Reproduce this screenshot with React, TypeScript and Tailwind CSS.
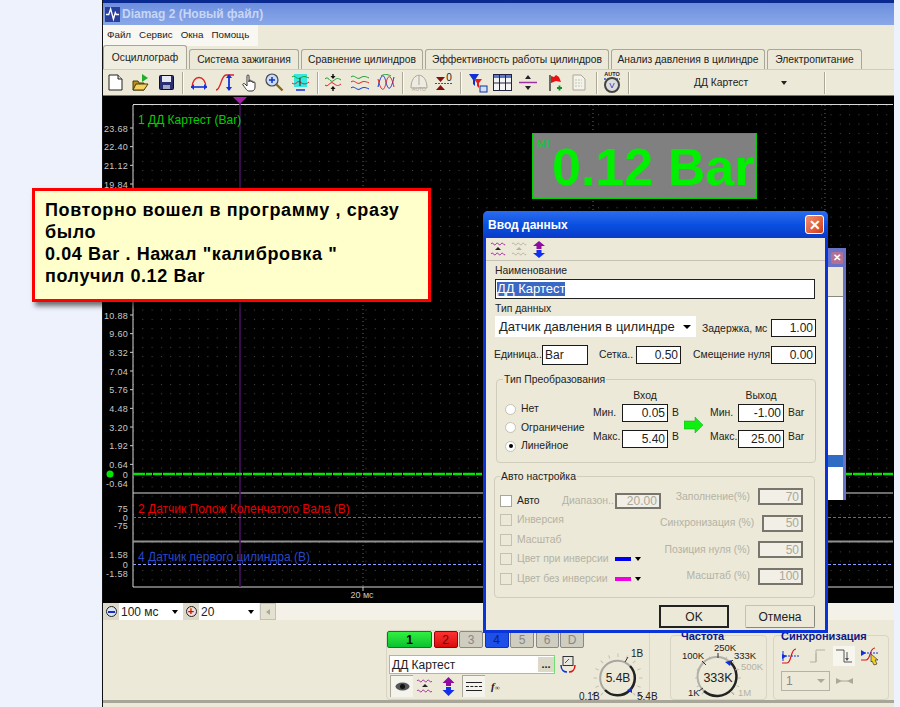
import React from "react";

const Doc = () => (
  <svg width="15" height="17" viewBox="0 0 15 17"><path d="M1 1h9l4 4v11H1z" fill="#fff" stroke="#222" /><path d="M10 1v4h4" fill="#ddd" stroke="#222" /></svg>
);
const Open = () => (
  <svg width="18" height="19" viewBox="0 0 18 19"><path d="M1 8h5l1 2h5v7H1z" fill="#b98f1c" stroke="#4a3a08" /><path d="M1 17l3-6h12l-4 6z" fill="#f4d25f" stroke="#4a3a08" /><path d="M10 1l6 4-6 4z" fill="#1fae2a" /></svg>
);
const Save = () => (
  <svg width="15" height="15" viewBox="0 0 15 15"><rect x="0.5" y="0.5" width="14" height="14" rx="1" fill="#2a2f70" stroke="#111" /><rect x="3" y="1" width="9" height="6" fill="#e8e8f4" /><rect x="4" y="10" width="7" height="4" fill="#a4a8c8" /></svg>
);
const ArcW = () => (
  <svg width="18" height="19" viewBox="0 0 18 19"><path d="M2 15C2 1 16 1 16 15" fill="none" stroke="#e02020" strokeWidth="1.4" /><path d="M1 14h16" stroke="#1030e0" strokeWidth="1.6" /><path d="M1 14l3-3v6zM17 14l-3-3v6z" fill="#1030e0" /></svg>
);
const ArcH = () => (
  <svg width="20" height="19" viewBox="0 0 20 19"><path d="M1 17C6 17 6 2 11 2h8" fill="none" stroke="#e02020" strokeWidth="1.3" /><path d="M14 2v15" stroke="#1030e0" strokeWidth="1.8" /><path d="M14 1l-3 4h6zM14 18l-3-4h6z" fill="#1030e0" /></svg>
);
const HandI = () => (
  <svg width="18" height="19" viewBox="0 0 18 19"><path d="M6 11V3a1 1 0 012 0v6-1a1 1 0 012 0v1a1 1 0 012 0v1a1 1 0 012 0v4c0 2-1 4-3 4H8c-2 0-3-2-6-6-1-1 1-2 2-1l2 2z" fill="#fff" stroke="#222" strokeWidth="0.9" /></svg>
);
const Zoomer = () => (
  <svg width="19" height="19" viewBox="0 0 19 19"><circle cx="7" cy="7" r="6" fill="#c8dcf4" stroke="#445" strokeWidth="1.2" /><path d="M4 7h6M7 4v6" stroke="#1030c0" strokeWidth="1.5" /><path d="M11.5 11.5l6 6" stroke="#8a6a1c" strokeWidth="2.4" /></svg>
);
const Cyan = () => (
  <svg width="19" height="19" viewBox="0 0 19 19"><rect x="3" y="1" width="13" height="13" fill="#35e8e0" /><path d="M1 4c3-3 4 3 8 1s4-2 9 0" fill="none" stroke="#18a030" /><path d="M1 10c4 3 5-3 8-1s5 3 9 0" fill="none" stroke="#e02020" /><path d="M5 17h9" stroke="#1030e0" strokeWidth="1.5" /><path d="M9 5v8" stroke="#222" /></svg>
);
const Wave3 = () => (
  <svg width="18" height="19" viewBox="0 0 18 19"><path d="M1 6c3-4 5 4 8 2s4-4 8-1" fill="none" stroke="#18a030" /><path d="M1 12c3 3 5-4 8-2s4 4 8 1" fill="none" stroke="#e02020" /><path d="M9 1v4M9 14v4" stroke="#111" strokeWidth="1.4" /><path d="M9 6L6.5 3h5zM9 13l-2.500 3h5z" fill="#111" /></svg>
);
const Wave4 = () => (
  <svg width="20" height="19" viewBox="0 0 20 19"><path d="M1 4c3-3 6 3 9 1s5-2 9 0" fill="none" stroke="#18a030" /><path d="M1 9c3-3 6 3 9 1s5-2 9 0" fill="none" stroke="#e02020" /><path d="M1 15c3-3 6 3 9 1s5-2 9 0" fill="none" stroke="#1030e0" /></svg>
);
const Wave5 = () => (
  <svg width="18" height="19" viewBox="0 0 18 19"><path d="M1 14C4 0 7 0 9 9s5 9 8-5" fill="none" stroke="#1030e0" /><path d="M1 6c3 13 6 13 8 4s5-9 8 4" fill="none" stroke="#e02020" /><path d="M4 3c3-2 6-2 10 0" fill="none" stroke="#18a030" /></svg>
);
const AutoOff = () => (
  <svg width="18" height="20" viewBox="0 0 18 20"><path d="M1 15C1 -2 17 -2 17 15z" fill="#eeece0" stroke="#aaa69a" /><path d="M9 3v9" stroke="#aaa69a" /><text x="9" y="18" textAnchor="middle" fontSize="5" fill="#aaa69a" fontFamily="Liberation Sans">AUTO</text></svg>
);
const Zero = () => (
  <svg width="18" height="19" viewBox="0 0 18 19"><path d="M1 4h9l-4.500 5zM1 17h9l-4.500-5z" fill="#8a1010" /><path d="M0 10.500h18" stroke="#555" strokeDasharray="2 1" /><text x="14" y="8" textAnchor="middle" fontSize="10" fill="#222" fontFamily="Liberation Sans">0</text></svg>
);
const Filter = () => (
  <svg width="20" height="20" viewBox="0 0 20 20"><path d="M1 1h10l-4 6v6L5 11V7z" fill="#1030d0" /><path d="M6 6h8l-3 4v5l-2-2v-3z" fill="#e02020" /><rect x="12" y="13" width="7" height="6" fill="#cfe0f8" stroke="#1030a0" /></svg>
);
const Table = () => (
  <svg width="19" height="17" viewBox="0 0 19 17"><rect x="0.500" y="0.500" width="18" height="16" fill="#f4f4f4" stroke="#224" /><rect x="1" y="1" width="17" height="3" fill="#5878c8" /><path d="M6.500 1v15M12.500 1v15M1 9h17" stroke="#224" /></svg>
);
const Divider = () => (
  <svg width="18" height="17" viewBox="0 0 18 17"><path d="M0 8.500h18" stroke="#a030a8" strokeWidth="1.5" /><path d="M9 1l-3 4h6zM9 16l-3-4h6z" fill="#222" /></svg>
);
const FlagI = () => (
  <svg width="14" height="18" viewBox="0 0 14 18"><path d="M2 1v16" stroke="#333" strokeWidth="1.4" /><path d="M3 2l3 1 2-2 3 2 2 5-5-1-5 2z" fill="#e81010" /><path d="M9 14h5M11.500 11.500v5" stroke="#109020" strokeWidth="1.8" /></svg>
);
const DocOff = () => (
  <svg width="14" height="17" viewBox="0 0 14 17"><path d="M1 1h8l4 4v11H1z" fill="#f4f3ea" stroke="#aaa69a" /><path d="M3 6h7M3 9h7M3 12h7" stroke="#c4c1b4" strokeDasharray="2 1" /></svg>
);
const AutoV = () => (
  <svg width="18" height="23" viewBox="0 0 18 23"><text x="9" y="5" textAnchor="middle" fontSize="5.500" fontWeight="700" fill="#222" fontFamily="Liberation Sans">AUTO</text><path d="M1 8h16" stroke="#3050e0" strokeWidth="1.500" strokeDasharray="2 1" /><circle cx="9" cy="14" r="7" fill="#ddd" stroke="#444" strokeWidth="2" /><text x="9" y="17" textAnchor="middle" fontSize="8" fill="#2030c0" fontFamily="Liberation Sans">V</text></svg>
);
const Sep = ({ className }: { className: string }) => <div className={`h-[22px] w-[2px] border-l border-[#aca899] bg-[#fbfaf4] ${className}`} />;

const ticks1 = ["23.68", "22.40", "21.12", "19.84"];
const ticks2 = ["10.88", "9.60", "8.32", "7.04", "5.76", "4.48", "3.20", "1.92", "0.64"];

function Chart() {
  return (
    <svg className="block h-[507px] w-[791px]" viewBox="103 96 791 507" fontFamily="Liberation Sans">
      <defs>
        <pattern id="dots" x="133" y="105" width="9.300" height="9.300" patternUnits="userSpaceOnUse">
          <rect x="0" y="0" width="1" height="1" fill="#4a4a4a" />
        </pattern>
      </defs>
      <rect x="103" y="96" width="791" height="507" fill="#000" />
      <rect x="133" y="105" width="760" height="482" fill="url(#dots)" />
      {[363, 593, 825].map((x) => (
        <path key={x} d={`M${x} 105V587`} stroke="#666" strokeDasharray="1 3" />
      ))}
      <path d="M133 104.500H893M133 105V587M133 493H893M133 587H893" stroke="#d8d8d8" fill="none" />
      <path d="M133 541.500H893" stroke="#909090" strokeWidth="2" />
      <path d="M240 100V587" stroke="#4b1060" strokeWidth="1.500" />
      <path d="M233 97h14l-7 7z" fill="#a020a8" />
      <path d="M133 474H893" stroke="#00e800" strokeWidth="2.500" strokeDasharray="12 1 6 1 9 1" />
      <path d="M133 517.500H893" stroke="#ff3030" strokeDasharray="3 2" />
      <path d="M133 564.500H893" stroke="#8a9cff" strokeDasharray="3 2" />
      <circle cx="110" cy="474" r="3.500" fill="#00e800" />
      <text x="138" y="124" fontSize="12" fill="#00d000">1 ДД Картест (Bar)</text>
      <text x="138" y="513" fontSize="12" fill="#e80000">2 Датчик Полож Коленчатого Вала (В)</text>
      <text x="138" y="561" fontSize="12" fill="#2848c8">4 Датчик первого цилиндра (В)</text>
      {ticks1.map((t, i) => (
        <g key={t}>
          <text x="128" y={131.500 + i * 18.670} fontSize="9" letterSpacing="0.3" textAnchor="end" fill="#c8c8c8">{t}</text>
          <path d={`M130 ${128 + i * 18.670}h3`} stroke="#ccc" />
        </g>
      ))}
      {ticks2.map((t, i) => (
        <g key={t}>
          <text x="128" y={318.500 + i * 18.670} fontSize="9" letterSpacing="0.3" textAnchor="end" fill="#c8c8c8">{t}</text>
          <path d={`M130 ${315 + i * 18.670}h3`} stroke="#ccc" />
        </g>
      ))}
      {[["0", 477.500], ["-0.64", 486.500], ["75", 511.500], ["0", 520.500], ["-75", 528.500], ["1.58", 557.500], ["0", 567.500], ["-1.58", 576.500]].map(([t, y], i) => (
        <text key={i} x="128" y={y as number} fontSize="9" letterSpacing="0.3" textAnchor="end" fill="#c8c8c8">{t}</text>
      ))}
      <path d="M363 587v4" stroke="#ccc" />
      <text x="362" y="598" fontSize="9" textAnchor="middle" fill="#c8c8c8">20 мс</text>
    </svg>
  );
}

function Knob1() {
  const ticks = Array.from({ length: 13 }, (_, i) => -135 + i * 22.500);
  return (
    <svg width="84" height="56" viewBox="0 0 84 56" fontFamily="Liberation Sans" className="overflow-visible">
      {ticks.map((a) => (
        <path key={a} d="M42 6v-3.500" transform={`rotate(${a} 42 27)`} stroke="#c4c1b4" />
      ))}
      <path d="M29 39A17 17 0 0154 15" fill="none" stroke="#a8a8a0" strokeWidth="2" />
      <path d="M54 15A17 17 0 0129 39" fill="none" stroke="#222" strokeWidth="2.500" />
      <path d="M51 39l5-2 0 5z" fill="#1030e0" />
      <text x="42" y="31" textAnchor="middle" fontSize="12" fill="#222">5.4В</text>
      <text x="55" y="6" fontSize="10" fill="#222">1В</text>
      <path d="M52 6l-3 5M21 41l-5 3M62 42l5 4" stroke="#333" fill="none" />
      <text x="3" y="49" fontSize="10" fill="#222">0.1В</text>
      <text x="61" y="49" fontSize="10" fill="#222">5.4В</text>
    </svg>
  );
}

function Knob2() {
  const ticks = Array.from({ length: 13 }, (_, i) => -135 + i * 22.500);
  return (
    <svg width="96" height="58" viewBox="0 0 96 58" fontFamily="Liberation Sans">
      {ticks.map((a) => (
        <path key={a} d="M47 17v-3" transform={`rotate(${a} 47 37)`} stroke="#c4c1b4" />
      ))}
      <path d="M33 50A18 18 0 0159 21" fill="none" stroke="#b0b0a8" strokeWidth="2" />
      <path d="M59 21A18 18 0 0133 50" fill="none" stroke="#222" strokeWidth="2.500" />
      <path d="M54 21l7-2-2 6z" fill="#1030e0" />
      <text x="47" y="41" textAnchor="middle" fontSize="12.500" fill="#222">333K</text>
      <text x="43" y="10" fontSize="9.500" fill="#222">250K</text>
      <text x="11" y="18" fontSize="9.500" fill="#222">100K</text>
      <text x="63" y="18" fontSize="9.500" fill="#222">333K</text>
      <text x="70" y="29" fontSize="9.500" fill="#b4b2a4">500K</text>
      <text x="17" y="55" fontSize="9.500" fill="#222">1K</text>
      <text x="67" y="55" fontSize="9.500" fill="#b4b2a4">1M</text>
      <path d="M47 12v5M31 20l4 4M62 19l-3 3M28 50l4-3" stroke="#333" />
      <path d="M67 28l-3 1M60 51l3 3" stroke="#b4b2a4" />
    </svg>
  );
}

const Chan = ({ label, className }: { label: string; className: string }) => (
  <div className={`flex h-[17px] items-center justify-center rounded-[2px] border text-[12px] ${className}`}>{label}</div>
);

const Field = ({ value, className = "", off = false, left = false }: { value: string; className?: string; off?: boolean; left?: boolean }) => (
  <div className={`flex items-center border px-[2px] text-[12px] leading-none ${left ? "justify-start" : "justify-end"} ${off ? "border-[#77756c] bg-[#f1efe6] text-[#aca899]" : "border-[#1a1a1a] bg-white text-[#222]"} ${className}`}>{value}</div>
);

const Radio = ({ label, on = false }: { label: string; on?: boolean }) => (
  <div className="flex h-[18.500px] items-center gap-[5px]">
    <div className="flex h-[11px] w-[11px] items-center justify-center rounded-full border border-[#c4c1b4] bg-white">
      {on && <div className="h-[4px] w-[4px] rounded-full bg-black" />}
    </div>
    <span>{label}</span>
  </div>
);

const Check = ({ label, on = false, extra }: { label: string; on?: boolean; extra?: React.ReactNode }) => (
  <div className={`flex h-[19.500px] items-center gap-[5px] ${on ? "text-[#222]" : "text-[#b4b2a4]"}`}>
    <div className={`h-[12px] w-[12px] border ${on ? "border-[#a8a698] bg-white" : "border-[#c4c1b4]"}`} />
    <span>{label}</span>
    {extra}
  </div>
);

const Swatch = ({ className }: { className: string }) => (
  <div className="absolute left-[115px] flex items-center gap-[4px]">
    <div className={`h-[4px] w-[16px] ${className}`} />
    <div className="h-0 w-0 border-x-[3px] border-t-[4px] border-x-transparent border-t-black" />
  </div>
);

const RightRow = ({ label, value }: { label: string; value: string }) => (
  <div className="flex h-[17px] items-center justify-end gap-[8px] text-[#b4b2a4]">
    <span>{label}</span>
    <Field value={value} off className="h-[17px] w-[45px] border-2" />
  </div>
);

const tabClass = "flex h-[20px] items-center justify-center rounded-t-[3px] border border-b-0 border-[#a8a698]";

export default function App() {
  return (
    <div className="relative flex h-[707px] w-[900px] overflow-hidden whitespace-nowrap bg-[#eef2fc] font-[family-name:'Liberation_Sans',sans-serif] text-[11px] text-[#222]">
      <div className="w-[102px] shrink-0" />
      <main className="flex h-[707px] w-[792px] shrink-0 flex-col border-l border-[#111] bg-[#ece9d8]">
        <div className="h-[3px] shrink-0 bg-[#0a2a90]" />
        <div className="flex h-[22px] shrink-0 items-center gap-[2px] bg-gradient-to-b from-[#6c8ede] to-[#8aa8e8] pl-[2px] text-[12px] font-bold text-[#c8d6f4]">
          <svg width="15" height="15" viewBox="0 0 16 16"><rect width="16" height="16" fill="#2a3f9c" /><path d="M1 8h3l2-6 3 11 2-7 1 2h3" fill="none" stroke="#fff" strokeWidth="1.400" /></svg>
          <span>Diamag 2 (Новый файл)</span>
        </div>
        <div className="flex h-[21px] shrink-0 items-center">
          <div className="flex h-full w-[155px] items-center gap-[8px] bg-[#f8f7f2] pl-[4px] text-[9.800px]">
            <span>Файл</span><span>Сервис</span><span>Окна</span><span>Помощь</span>
          </div>
        </div>
        <div className="flex h-[24px] shrink-0 items-end gap-[2px] border-b border-[#d0cdbc] text-[10.300px]">
          <div className="flex h-[24px] w-[84px] items-center justify-center rounded-t-[3px] border border-b-0 border-[#a8a698] bg-[#f0eee0]">Осциллограф</div>
          <div className={`${tabClass} w-[110px]`}>Система зажигания</div>
          <div className={`${tabClass} w-[122px]`}>Сравнение цилиндров</div>
          <div className={`${tabClass} w-[184px]`}>Эффективность работы цилиндров</div>
          <div className={`${tabClass} w-[154px]`}>Анализ давления в цилиндре</div>
          <div className={`${tabClass} w-[95px]`}>Электропитание</div>
        </div>
        <div className="flex h-[26px] shrink-0 items-center border-b border-[#777]">
          <div className="ml-[5px]"><Doc /></div>
          <div className="ml-[9px]"><Open /></div>
          <div className="ml-[9px]"><Save /></div>
          <Sep className="ml-[8px]" />
          <div className="ml-[6px]"><ArcW /></div>
          <div className="ml-[7px]"><ArcH /></div>
          <div className="ml-[6px]"><HandI /></div>
          <div className="ml-[6px]"><Zoomer /></div>
          <div className="ml-[7px]"><Cyan /></div>
          <Sep className="ml-[7px]" />
          <div className="ml-[5px]"><Wave3 /></div>
          <div className="ml-[8px]"><Wave4 /></div>
          <div className="ml-[7px]"><Wave5 /></div>
          <Sep className="ml-[7px]" />
          <div className="ml-[6px]"><AutoOff /></div>
          <div className="ml-[7px]"><Zero /></div>
          <Sep className="ml-[7px]" />
          <div className="ml-[6px]"><Filter /></div>
          <div className="ml-[5px]"><Table /></div>
          <div className="ml-[7px]"><Divider /></div>
          <div className="ml-[11px]"><FlagI /></div>
          <div className="ml-[10px]"><DocOff /></div>
          <Sep className="ml-[10px]" />
          <div className="ml-[5px]"><AutoV /></div>
          <Sep className="ml-[7px]" />
          <div className="flex w-[194px] items-center">
            <span className="ml-[64px] text-[10.300px]">ДД Картест</span>
            <div className="ml-[33px] h-0 w-0 border-x-[3px] border-t-[4px] border-x-transparent border-t-[#222]" />
          </div>
          <Sep className="" />
        </div>
        <Chart />
        <div className="flex h-[17px] shrink-0 items-center bg-[#f3f1e8] text-[12px]">
          <div className="flex h-[17px] w-[16px] items-center justify-center bg-[#dcd9c8]">
            <div className="flex h-[11px] w-[11px] items-center justify-center rounded-full border border-[#222] bg-[#dfe4f4]"><div className="h-[2px] w-[7px] bg-[#1030c0]" /></div>
          </div>
          <div className="flex h-[17px] w-[64px] items-center justify-between bg-white pl-[2px] pr-[5px]">
            <span>100 мс</span>
            <div className="h-0 w-0 border-x-[3px] border-t-[4px] border-x-transparent border-t-black" />
          </div>
          <div className="flex h-[17px] w-[16px] items-center justify-center bg-[#dcd9c8]">
            <div className="flex h-[11px] w-[11px] items-center justify-center rounded-full border border-[#222] bg-[#f4dede] text-[11px] font-bold leading-none text-[#c01010]">+</div>
          </div>
          <div className="flex h-[17px] w-[60px] items-center justify-between bg-white pl-[2px] pr-[5px]">
            <span>20</span>
            <div className="h-0 w-0 border-x-[3px] border-t-[4px] border-x-transparent border-t-black" />
          </div>
          <div className="ml-[1px] flex h-[17px] w-[16px] items-center justify-center border border-[#c4c1b4] bg-[#e4e1d0]">
            <div className="h-0 w-0 border-y-[3px] border-r-[4px] border-y-transparent border-r-[#aca899]" />
          </div>
        </div>
        <div className="flex h-[83px] shrink-0 items-start border-b-[3px] border-[#a8a698]">
          <div className="ml-[283px] mt-[10px] h-[70px] w-[264px] rounded-[4px] border border-[#d8d5c4]">
            <div className="flex gap-[1.500px]">
              <Chan label="1" className="w-[45px] border-[#0a7a2a] bg-gradient-to-b from-[#30f040] to-[#08c030] font-bold text-black" />
              <Chan label="2" className="w-[24px] border-[#900] bg-gradient-to-b from-[#ff3030] to-[#d80808] text-[#600]" />
              <Chan label="3" className="w-[24px] border-[#888] bg-[#cfccc0] text-[#888]" />
              <Chan label="4" className="w-[24px] border-[#1030b0] bg-[#1c50e8] text-[#102070]" />
              <Chan label="5" className="w-[24px] border-[#888] bg-[#cfccc0] text-[#888]" />
              <Chan label="6" className="w-[23px] border-[#888] bg-[#cfccc0] text-[#888]" />
              <Chan label="D" className="w-[24px] border-[#888] bg-[#cfccc0] text-[#888]" />
            </div>
            <div className="mt-[3px] flex">
              <div className="w-[191px] pl-[2px] pt-[4px]">
                <div className="flex items-center">
                  <div className="flex h-[19px] w-[166px] items-center justify-between border border-[#70e070] bg-white pl-[2px] text-[12px]">
                    <span>ДД Картест</span>
                    <div className="flex h-[15px] w-[16px] items-center justify-center bg-[#dcd9c8] text-[11px] font-bold leading-none">...</div>
                  </div>
                  <svg className="ml-[5px]" width="16" height="18" viewBox="0 0 16 18"><rect x="3" y="0.500" width="10" height="9" fill="#e8e8e0" stroke="#333" /><path d="M5 7l4-4" stroke="#555" /><path d="M1 9c0 5 3 7 6 7" fill="none" stroke="#1030d0" strokeWidth="1.500" /><path d="M15 9c0 5-3 7-6 7" fill="none" stroke="#e01010" strokeWidth="1.500" /></svg>
                </div>
                <div className="mt-[1px] flex items-center pl-[1px]">
                  <div className="flex h-[22px] w-[23px] items-center justify-center border-l border-t border-[#aca899] bg-[#f4f3ec]">
                    <svg width="15" height="9" viewBox="0 0 15 9"><ellipse cx="7.500" cy="4.500" rx="7" ry="4" fill="#555" /><circle cx="7.500" cy="4.500" r="2.500" fill="#111" /></svg>
                  </div>
                  <svg className="ml-[3px]" width="18" height="18" viewBox="0 0 18 18"><path d="M1 4c2-3 3 3 5 0s3 3 5 0 3 3 5 0M1 14c2-3 3 3 5 0s3 3 5 0 3 3 5 0" fill="none" stroke="#a020a0" /><path d="M9 7l-3 3h6z" fill="#222" /></svg>
                  <svg className="ml-[7px]" width="15" height="19" viewBox="0 0 15 19"><path d="M7.500 0l6 6H10v3H5V6H1.500z" fill="#900ca0" /><path d="M7.500 19l6-6H10v-3H5v3H1.500z" fill="#1030f0" /></svg>
                  <div className="ml-[6px] flex h-[22px] w-[23px] flex-col items-center justify-center gap-[3px] border-l border-t border-[#aca899] bg-[#f4f3ec]">
                    <div className="h-px w-[16px] bg-[#222]" /><div className="h-px w-[16px] border-t border-dashed border-[#222]" /><div className="h-px w-[16px] bg-[#222]" />
                  </div>
                  <span className="ml-[6px] font-[family-name:'Liberation_Serif',serif] text-[11px] font-bold italic">f<span className="text-[7px] not-italic">∞</span></span>
                </div>
              </div>
              <Knob1 />
            </div>
          </div>
          <div className="ml-[20px] mt-[15px] h-[65px] w-[97px] rounded-[4px] border border-[#d8d5c4]">
            <div className="-mt-[5px] pl-[10px] font-bold leading-[10px] text-[#101880]">Частота</div>
            <Knob2 />
          </div>
          <div className="ml-[6px] mt-[15px] h-[65px] w-[116px] rounded-[4px] border border-[#d8d5c4] pl-[7px]">
            <div className="-mt-[5px] font-bold leading-[11px] text-[#101880]">Синхронизация</div>
            <div className="mt-[4px] flex items-center">
              <svg width="20" height="18" viewBox="0 0 20 18"><path d="M1 16h5C11 16 9 2 15 2" fill="none" stroke="#e01010" strokeWidth="1.200" /><path d="M1 9h18" stroke="#1030e0" strokeDasharray="2 1" /><path d="M2 4v10" stroke="#1030e0" /><path d="M1 7l5 2-5 3z" fill="#1030e0" /></svg>
              <svg className="ml-[8px]" width="18" height="18" viewBox="0 0 18 18"><path d="M1 15h6V3h9" fill="none" stroke="#b4b2a4" /><path d="M7 6v9" stroke="#b4b2a4" /></svg>
              <div className="ml-[6px] flex h-[20px] w-[22px] items-center justify-center bg-[#f6f5ee]">
                <svg width="18" height="18" viewBox="0 0 18 18"><path d="M1 3h8v12h8" fill="none" stroke="#555" /><path d="M12 5v8" stroke="#555" /><path d="M12 14l-2-3h4z" fill="#555" /></svg>
              </div>
              <svg className="ml-[5px]" width="20" height="20" viewBox="0 0 20 20"><path d="M1 14h5C11 14 9 2 15 2" fill="none" stroke="#e01010" strokeWidth="1.200" /><path d="M1 7h18" stroke="#1030e0" strokeDasharray="2 1" /><path d="M1 4l5 3-5 3z" fill="#1030e0" /><path d="M11 8l7 6-3 0 2 4-3 1-2-4-1 1z" fill="#f4d020" stroke="#222" strokeWidth="0.600" /></svg>
            </div>
            <div className="mt-[5px] flex items-center">
              <div className="flex h-[20px] w-[49px] items-center justify-between border border-[#b4b2a4] px-[4px] text-[12px] text-[#888]">
                <span>1</span>
                <div className="h-0 w-0 border-x-[4px] border-t-[4px] border-x-transparent border-t-[#aca899]" />
              </div>
              <svg className="ml-[6px]" width="17" height="8" viewBox="0 0 17 8"><path d="M0 1l6 3-6 3zM17 1l-6 3 6 3z" fill="#aca899" /><path d="M5 4h7" stroke="#aca899" /></svg>
            </div>
          </div>
        </div>
      </main>
      <div className="w-[6px] shrink-0" />

      {/* measurement readout */}
      <div className="absolute left-[532px] top-[133px] h-[66px] w-[225px] border border-[#00d000] bg-[#808080]">
        <span className="absolute left-[4px] top-[3px] text-[10px] text-[#10d010]">M1</span>
        <span className="absolute left-[19px] top-[3px] text-[52px] font-bold leading-[60px] text-[#00f000]">0.12 Bar</span>
      </div>

      {/* window behind the dialog */}
      <div className="absolute left-[825px] top-[248px] flex h-[252px] w-[21px] flex-col border-x-[3px] border-[#6a72c8] bg-[#ece9d8]">
        <div className="flex h-[19px] items-start justify-end bg-[#6a72c8] pt-[4px]">
          <div className="flex h-[12px] w-[12px] items-center justify-center rounded-[2px] bg-[#b47090] text-[10px] font-bold leading-none text-white">✕</div>
        </div>
        <div className="h-[30px] border-b border-[#8a887c]" />
        <div className="flex-1 bg-white pt-[158px]"><div className="h-[12px] bg-[#2f6cc4]" /></div>
      </div>

      {/* dialog */}
      <div className="absolute left-[483px] top-[211px] flex h-[422px] w-[345px] flex-col rounded-t-[5px] border-[3px] border-t-0 border-[#0a34d8] bg-[#ece9d8] text-[10.400px]">
        <div className="-mx-[3px] flex h-[27px] shrink-0 items-center justify-between rounded-t-[5px] bg-gradient-to-b from-[#2a6cf0] via-[#0a50e0] to-[#0a3ac8] pl-[5px] pr-[4px] text-[12px] font-bold text-white">
          <span>Ввод данных</span>
          <div className="flex h-[19px] w-[19px] items-center justify-center rounded-[3px] border border-white bg-gradient-to-br from-[#f09070] to-[#d03810] text-[14px] font-bold leading-none text-white">✕</div>
        </div>
        <div className="flex h-[23px] shrink-0 items-center gap-[5px] border-b border-[#c4c1b4] pl-[4px]">
          <svg width="16" height="16" viewBox="0 0 16 16"><path d="M1 3c2-3 3 3 5 0s3 3 5 0 3 3 4 0M1 13c2-3 3 3 5 0s3 3 5 0 3 3 4 0" fill="none" stroke="#a020a0" /><path d="M8 6l-3 3h6z" fill="#222" /></svg>
          <svg width="16" height="16" viewBox="0 0 16 16"><path d="M1 3c2-3 3 3 5 0s3 3 5 0 3 3 4 0M1 13c2-3 3 3 5 0s3 3 5 0 3 3 4 0" fill="none" stroke="#b4b2a4" /><path d="M8 6l-3 3h6z" fill="#b4b2a4" /></svg>
          <svg width="14" height="17" viewBox="0 0 14 17"><path d="M7 0l6 5H9.500v3h-5V5H1z" fill="#900ca0" /><path d="M7 17l6-5H9.500V9h-5v3H1z" fill="#1030f0" /></svg>
        </div>
        <div className="mt-[3px] shrink-0 pl-[9px] leading-[14px]">Наименование</div>
        <div className="ml-[9px] mt-[1px] flex h-[20px] w-[320px] shrink-0 items-center border border-[#222] bg-white pl-[1px] text-[13px]">
          <span className="bg-[#3a68c4] leading-[14px] text-white">ДД Картест</span>
        </div>
        <div className="mt-[3px] shrink-0 pl-[9px] leading-[14px]">Тип данных</div>
        <div className="flex shrink-0 items-end">
          <div className="ml-[9px] flex h-[21px] w-[201px] items-center justify-between bg-white pl-[4px] pr-[5px] text-[13px]">
            <span>Датчик давления в цилиндре</span>
            <div className="h-0 w-0 border-x-[4px] border-t-[4px] border-x-transparent border-t-black" />
          </div>
          <span className="ml-[6px] w-[69px] pb-[1px] leading-[14px]">Задержка, мс</span>
          <Field value="1.00" className="h-[18px] w-[45px]" />
        </div>
        <div className="mt-[8px] flex shrink-0 items-center">
          <span className="ml-[8px] w-[48px]">Единица..</span>
          <Field value="Bar" left className="h-[20px] w-[46px]" />
          <span className="ml-[11px] w-[37px]">Сетка..</span>
          <Field value="0.50" className="h-[18px] w-[45px]" />
          <span className="ml-[12px] w-[78px]">Смещение нуля</span>
          <Field value="0.00" className="h-[18px] w-[45px]" />
        </div>
        <div className="relative ml-[10px] mt-[14px] flex h-[84px] w-[320px] shrink-0 rounded-[4px] border border-[#d0cdbc] pl-[8px] pt-[9px]">
          <span className="absolute -top-[7px] left-[6px] bg-[#ece9d8] px-[1px] leading-[14px]">Тип Преобразования</span>
          <div className="w-[88px] pt-[11px]">
            <Radio label="Нет" />
            <Radio label="Ограничение" />
            <Radio label="Линейное" on />
          </div>
          <div className="grid grid-cols-[29px_46px_16px] grid-rows-[15px_18px_26px] items-end">
            <span className="col-start-2 text-center">Вход</span>
            <span className="col-start-1 self-center">Мин.</span>
            <Field value="0.05" className="h-[18px]" />
            <span className="self-center pl-[4px]">В</span>
            <span className="pb-[3px]">Макс.</span>
            <Field value="5.40" className="h-[18px]" />
            <span className="pb-[3px] pl-[4px]">В</span>
          </div>
          <svg className="mt-[28px]" width="20" height="16" viewBox="0 0 20 16"><path d="M0 4h11V0l8 8-8 8v-4H0z" fill="#10f010" stroke="#10a020" strokeWidth="0.500" /></svg>
          <div className="ml-[6px] grid grid-cols-[28px_46px_30px] grid-rows-[15px_18px_26px] items-end">
            <span className="col-start-2 text-center">Выход</span>
            <span className="col-start-1 self-center">Мин.</span>
            <Field value="-1.00" className="h-[18px]" />
            <span className="self-center pl-[4px]">Bar</span>
            <span className="pb-[3px]">Макс.</span>
            <Field value="25.00" className="h-[18px]" />
            <span className="pb-[3px] pl-[4px]">Bar</span>
          </div>
        </div>
        <div className="relative ml-[8px] mt-[13px] flex h-[122px] w-[321px] shrink-0 rounded-[4px] border border-[#d0cdbc] pl-[5px]">
          <span className="absolute -top-[7px] left-[5px] bg-[#ece9d8] px-[1px] leading-[14px]">Авто настройка</span>
          <div className="relative w-[160px] pt-[14px]">
            <Check label="Авто" on extra={
              <div className="absolute left-[62px] flex items-center gap-px text-[#b4b2a4]">
                <span>Диапазон..</span>
                <Field value="20.00" off className="h-[16px] w-[46px] border-2" />
              </div>
            } />
            <Check label="Инверсия" />
            <Check label="Масштаб" />
            <Check label="Цвет при инверсии" extra={<Swatch className="bg-[#0000f0]" />} />
            <Check label="Цвет без инверсии" extra={<Swatch className="bg-[#f000e0]" />} />
          </div>
          <div className="flex w-[143px] flex-col gap-[9.500px] pt-[11px]">
            <RightRow label="Заполнение(%)" value="70" />
            <RightRow label="Синхронизация (%)" value="50" />
            <RightRow label="Позиция нуля (%)" value="50" />
            <RightRow label="Масштаб (%)" value="100" />
          </div>
        </div>
        <div className="mt-[7px] flex shrink-0 justify-end gap-[16px] pr-[10px] text-[12px]">
          <div className="flex h-[23px] w-[70px] items-center justify-center border-2 border-[#222] bg-[#ece9d8]">OK</div>
          <div className="flex h-[23px] w-[70px] items-center justify-center rounded-[2px] border border-[#c4c1b4] border-b-[#8a887c] border-r-[#8a887c] bg-[#ece9d8]">Отмена</div>
        </div>
      </div>

      {/* yellow note */}
      <div className="absolute left-[32px] top-[188px] h-[114px] w-[399px] border-[3px] border-[#ff0000] bg-[#ffffcc] pl-[10px] pt-[8px] text-[18px] font-bold leading-[22px] tracking-[0.6px] text-black shadow-[3px_4px_5px_rgba(0,0,0,0.55)]">
        Повторно вошел в программу , сразу<br />было<br />0.04 Bar . Нажал "калибровка "<br />получил 0.12 Bar
      </div>
    </div>
  );
}
